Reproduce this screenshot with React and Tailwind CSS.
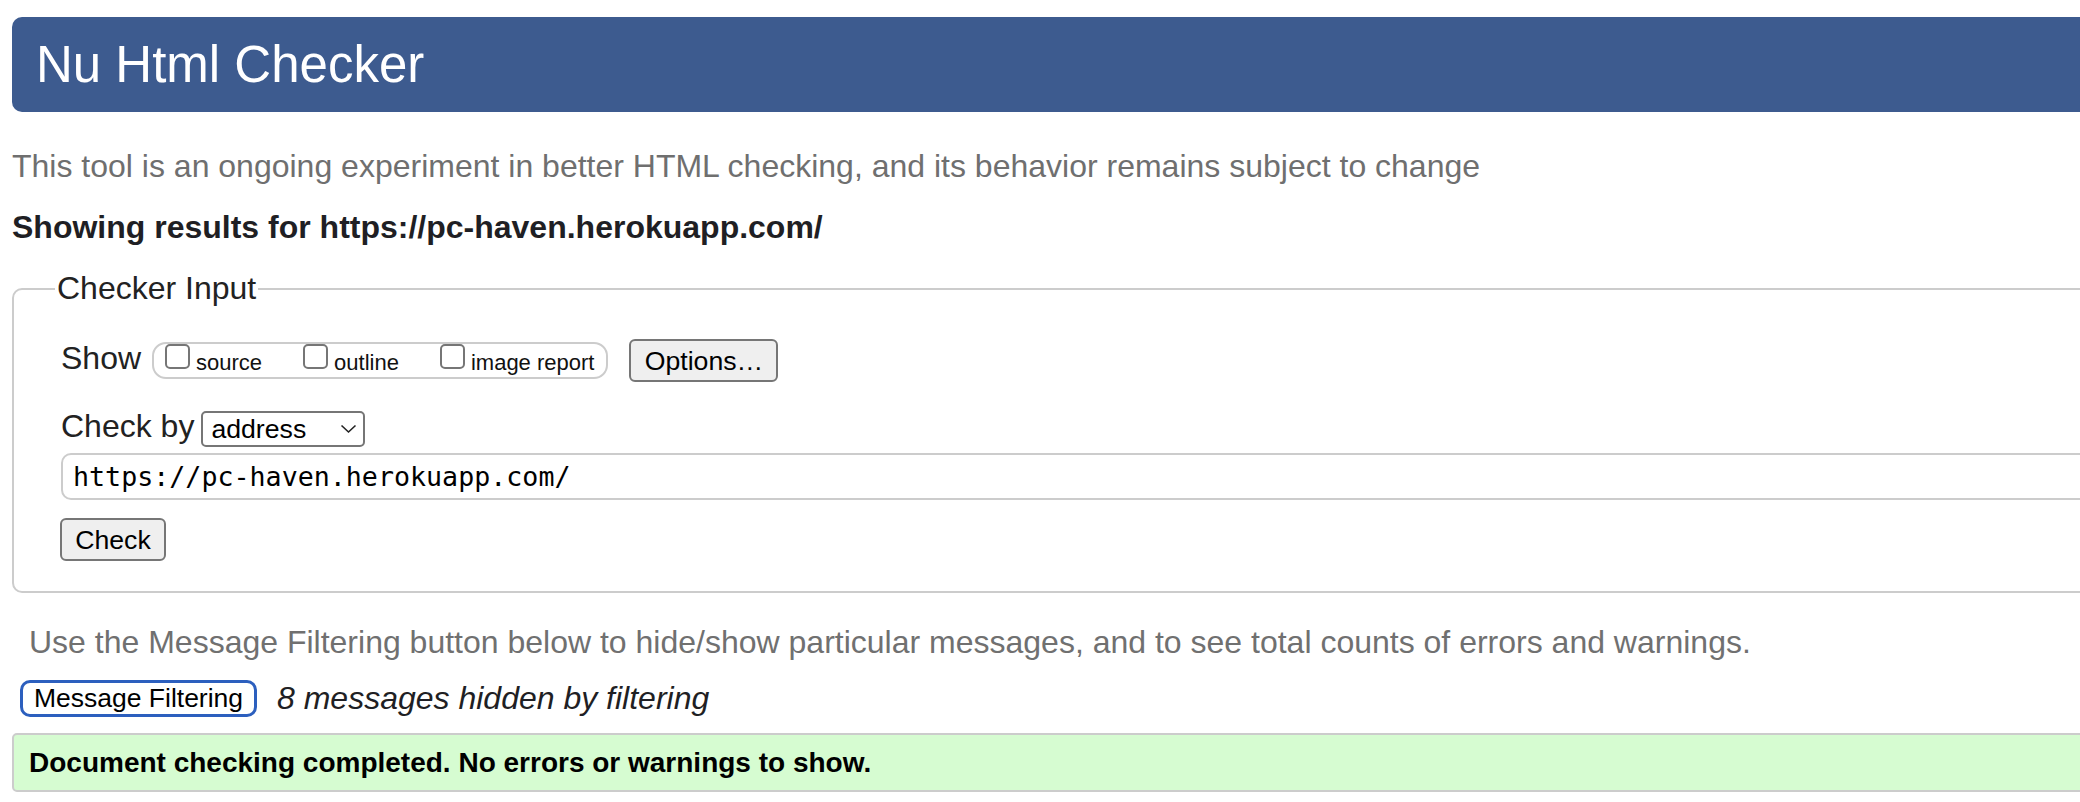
import React from "react";

const SANS = "font-['Liberation_Sans',Arial,Helvetica,sans-serif]";

function Checkbox({ label, first }) {
  return (
    <span className={`flex items-start ${first ? "" : "ml-[41px]"}`}>
      <span className="block h-[25px] w-[25px] rounded-[5px] border-2 border-[#767676] bg-white" />
      <span className="ml-[6px] pt-[6px] text-[22px] leading-[25px] text-[#111]">{label}</span>
    </span>
  );
}

function GrayButton({ children, className = "" }) {
  return (
    <button
      type="button"
      className={`flex h-[43px] items-center justify-center rounded-[6px] border-2 border-[#767676] bg-[#efefef] text-[26.67px] text-black ${className}`}
    >
      {children}
    </button>
  );
}

export default function App() {
  return (
    <div className={`h-[802px] w-[2080px] overflow-hidden bg-white ${SANS}`}>
      <div className="w-[2400px] pl-[12px] pt-[17px]">
        <h1 className="flex h-[95px] items-center rounded-[10px] bg-[#3d5b8f] pl-[24px] text-[51px] leading-[57px] font-normal text-white">
          Nu Html Checker
        </h1>

        <p className="mt-[36px] text-[32px] leading-[37px] text-[#6f6f6f]">
          This tool is an ongoing experiment in better HTML checking, and its behavior remains subject to change
        </p>

        <p className="mt-[24px] text-[32px] leading-[37px] font-bold text-[#1f1f24]">
          Showing results for https://pc-haven.herokuapp.com/
        </p>

        <fieldset className="mt-[24px] rounded-[10px] border-2 border-[#cccccc] pb-[30px] pl-[41px] pt-[32px]">
          <legend className="px-[2px] text-[32px] leading-[37px] text-[#222]">Checker Input</legend>
          <div className="pl-[6px]">
            <div className="flex items-start">
              <span className="mt-[1px] text-[32px] leading-[37px] text-[#222]">Show</span>
              <span className="ml-[11px] mt-[3px] flex h-[37px] items-start rounded-[14px] border-2 border-[#cccccc] pl-[11px] pr-[12px]">
                <Checkbox label="source" first />
                <Checkbox label="outline" />
                <Checkbox label="image report" />
              </span>
              <GrayButton className="ml-[21px] w-[149px]">Options…</GrayButton>
            </div>

            <div className="mt-[29px] flex items-start">
              <span className="-mt-[3px] text-[32px] leading-[37px] text-[#222]">Check by</span>
              <div className="ml-[7px] flex h-[36px] w-[164px] items-center justify-between rounded-[5px] border-2 border-[#767676] bg-white pl-[8px] pr-[6px] text-[26.67px] text-black">
                <span>address</span>
                <svg width="17" height="10" viewBox="0 0 17 10" fill="none" stroke="#222" strokeWidth="1.6">
                  <polyline points="1.5,1.5 8.5,8 15.5,1.5" />
                </svg>
              </div>
            </div>

            <div className="mt-[6px] flex h-[47px] items-center rounded-[10px] border-2 border-[#cccccc] pl-[10px] font-['DejaVu_Sans_Mono',Menlo,monospace] text-[26.67px] text-black">
              https://pc-haven.herokuapp.com/
            </div>

            <GrayButton className="mt-[18px] w-[106px] -ml-[1px]">Check</GrayButton>
          </div>
        </fieldset>

        <p className="ml-[17px] mt-[31px] text-[32px] leading-[37px] text-[#707070]">
          Use the Message Filtering button below to hide/show particular messages, and to see total counts of errors and warnings.
        </p>

        <div className="mt-[19px] flex items-center">
          <button
            type="button"
            className="ml-[8px] flex h-[37px] w-[237px] items-center justify-center rounded-[10px] border-[3px] border-[#2c5fbe] bg-white text-[26.5px] text-black"
          >
            Message Filtering
          </button>
          <span className="ml-[20px] text-[32px] leading-[37px] italic text-[#1f1f24]">8 messages hidden by filtering</span>
        </div>

        <div className="mt-[16px] flex h-[59px] items-center rounded-[5px] border-2 border-[#cccccc] bg-[#d6fcd1] pl-[15px] text-[28px] leading-[32px] font-bold text-black">
          Document checking completed. No errors or warnings to show.
        </div>
      </div>
    </div>
  );
}
